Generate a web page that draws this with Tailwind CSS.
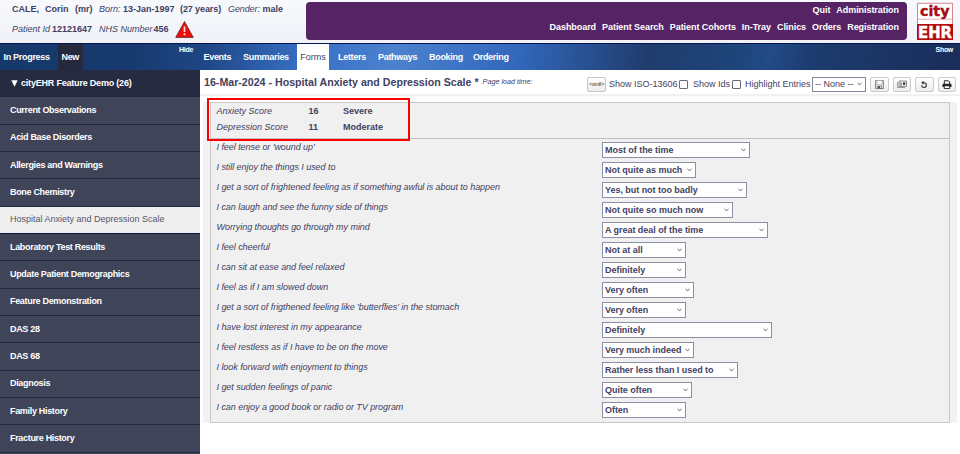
<!DOCTYPE html>
<html lang="en">
<head>
<meta charset="utf-8">
<title>cityEHR</title>
<script src="https://cdn.jsdelivr.net/npm/@tailwindcss/browser@4"></script>
</head>
<body class="w-[960px] h-[454px] overflow-hidden bg-white font-['Liberation_Sans',Arial,sans-serif] text-[9px] leading-none text-[#3f4162] flex flex-col whitespace-nowrap">
<header class="h-[43px] shrink-0 flex bg-linear-to-b from-[#f7f9fd] to-[#f0f2f8]">
  <div class="w-[306px] pl-3 shrink-0 text-[9px]">
    <div class="h-[19.5px] flex items-center font-bold">
      <span class="w-[33px]">CALE,</span><span class="w-[30px]">Corin</span><span class="w-6">(mr)</span>
      <span class="w-6 italic font-normal">Born:</span><span class="w-[57px]">13-Jan-1997</span><span class="w-[48px] tracking-[-.1px]">(27 years)</span>
      <span class="w-[34.5px] italic font-normal tracking-[-.1px]">Gender:</span><span>male</span>
    </div>
    <div class="h-5 flex items-center font-bold">
      <span class="w-10 italic font-normal">Patient Id</span><span class="w-[47px]">12121647</span>
      <span class="w-[54.5px] italic font-normal">NHS Number</span><span class="w-[21px]">456</span>
      <svg class="w-[19px] h-[17px]" viewBox="0 0 19 17"><path d="M9.5 .5 18.3 16.4H.7Z" fill="#f00b08" stroke="#622725" stroke-width=".8"/><path d="M9.5 5.5v5.4M9.5 12.3v2" stroke="#ffe9e9" stroke-width="1.7"/></svg>
    </div>
  </div>
  <div class="w-[601px] h-[38px] mt-0.5 shrink-0 rounded bg-[#562465] text-white font-bold text-[9px] tracking-[-.06px] pr-2 flex flex-col items-end">
    <div class="h-4 flex items-center gap-1.5"><span>Quit</span><span>Administration</span></div>
    <div class="h-4 mt-px flex items-center gap-1.5"><span>Dashboard</span><span>Patient Search</span><span>Patient Cohorts</span><span>In-Tray</span><span>Clinics</span><span>Orders</span><span>Registration</span></div>
  </div>
  <svg class="ml-[9px] mt-[2px] w-[38px] h-[39px]" viewBox="0 0 38 39">
    <path d="M1.5 1.3h35v36h-35z" fill="#fff" stroke="#cf5255" stroke-width=".7"/><path d="M1 17.2h36" stroke="#e28a8c" stroke-width=".7"/><path d="M1 22h36v16H1z" fill="#b40b10"/>
    <text x="4" y="14.3" textLength="29.5" lengthAdjust="spacingAndGlyphs" font-family="DejaVu Sans" font-weight="bold" font-size="14" fill="#a90d12" stroke="#a90d12" stroke-width=".4">city</text>
    <text x="2" y="36.2" textLength="34" lengthAdjust="spacingAndGlyphs" font-family="DejaVu Sans" font-weight="bold" font-size="16" fill="#fff" stroke="#fff" stroke-width=".5">EHR</text>
  </svg>
</header>
<nav class="h-[27px] shrink-0 border-t border-[#0a1452] flex text-white font-bold text-[9px] tracking-[-.3px] bg-[linear-gradient(100deg,#16396c_0,#17396e_130px,#1e4583_200px,#376fc4_300px,#4c81cf_390px,#3268bd_510px,#203c6d_640px,#1e457b_730px,#224b88_760px,#1c3c6f_800px,#1a2c59_960px)]">
  <div class="w-[200px] flex">
    <span class="w-[58px] pl-[3.5px] flex items-center">In Progress</span>
    <span class="w-[24.5px] bg-[#26283d] flex items-center justify-center">New</span>
    <span class="ml-auto mr-[7px] mt-0.5 text-[7px]">Hide</span>
  </div>
  <div class="flex items-center">
    <span class="w-[43px] pl-[3.5px]">Events</span><span class="w-[54px]">Summaries</span>
    <span class="h-full w-[32px] bg-white text-[#3f4162] font-normal tracking-[0] flex items-center justify-center">Forms</span>
    <span class="w-10 ml-[9px]">Letters</span><span class="w-[51px]">Pathways</span><span class="w-[44px]">Booking</span><span>Ordering</span>
  </div>
  <span class="ml-auto mr-[7px] mt-0.5 text-[7px]">Show</span>
</nav>
<div class="flex grow min-h-0">
  <aside id="side" class="w-[200px] shrink-0 overflow-hidden text-[9px] tracking-[-.32px] text-white font-bold bg-[#404458]">
    <div class="h-[27.3px] pl-[11px] flex items-center gap-[3px] tracking-[-.2px] bg-[#272b42] border-b border-[#22253d]">
      <svg class="w-[7px] h-[7px]" viewBox="0 0 7 7"><path d="M.3 .3h6.4L3.5 6.8Z" fill="#fff"/></svg><span>cityEHR Feature Demo (26)</span>
    </div>
  </aside>
  <main class="grow min-w-0">
    <div class="h-[26px] flex items-center pl-1 pr-1 border-b-2 border-[#f1f1f2]">
      <span class="text-[10.65px] font-bold">16-Mar-2024 - Hospital Anxiety and Depression Scale *</span>
      <span class="text-[7.2px] italic ml-1">Page load time:</span>
      <div class="ml-auto mt-1 flex items-center text-[9px]">
        <span class="w-[19px] h-[15px] border border-[#c4c4c4] rounded-[2px] bg-linear-to-b from-white to-[#ececec] flex items-center justify-center text-[6px] tracking-[-.5px] text-[#333]">&lt;xml/&gt;</span>
        <span class="w-[73px] pl-[3px]">Show ISO-13606</span><span class="w-[9px] h-[9px] border border-[#686979] rounded-[1px]"></span>
        <span class="w-[44px] pl-[5px]">Show Ids</span><span class="w-[9px] h-[9px] border border-[#686979] rounded-[1px]"></span>
        <span class="w-[71px] pl-1">Highlight Entries</span>
        <span class="w-[54px] h-[15px] border border-[#83859b] bg-white flex items-center pl-0.5 pr-[3px]">-- None --<svg class="ml-auto w-[5px] h-[4px]" viewBox="0 0 5 4"><path d="M.5 .7 2.5 3 4.5 .7" fill="none" stroke="#4b4d6b" stroke-width=".8"/></svg></span>
        <div class="ml-1 flex gap-1">
          <span class="w-[18.5px] h-[15px] border border-[#cbcbcb] rounded-[2px] bg-linear-to-b from-white to-[#ececec] flex items-center justify-center"><svg class="w-[9px] h-[9px]" viewBox="0 0 9 9"><path d="M.5 .5h8v8h-8z" fill="#d7d7d7" stroke="#777" stroke-width=".8"/><path d="M2 .5h5v4H2z" fill="#fff" stroke="#999" stroke-width=".5"/><path d="M2.5 6h4v2.5h-4z" fill="#555"/><path d="M5 6.5h1v1.5H5z" fill="#eee"/></svg></span>
          <span class="w-[18.5px] h-[15px] border border-[#cbcbcb] rounded-[2px] bg-linear-to-b from-white to-[#ececec] flex items-center justify-center"><svg class="w-[10px] h-[8px]" viewBox="0 0 10 8"><path d="M2 1h7.5v5.5H2z" fill="#eee" stroke="#666" stroke-width=".7"/><path d="M.5 2v5.5H8" fill="none" stroke="#777" stroke-width=".7"/><path d="M3 2.5h2v3H3z" fill="#999"/><path d="M6 2.5h2.3v2.3H6z" fill="#333"/></svg></span>
          <span class="w-[18.5px] h-[15px] border border-[#cbcbcb] rounded-[2px] bg-linear-to-b from-white to-[#ececec] flex items-center justify-center"><svg class="w-[8px] h-[9px]" viewBox="0 0 8 9"><path d="M2.8 2.7H4a2.4 2.4 0 1 1-2.4 2.6" fill="none" stroke="#333" stroke-width="1.1"/><path d="M1.1 2.7 3.6 .7v4Z" fill="#333"/></svg></span>
          <span class="w-[18.5px] h-[15px] border border-[#cbcbcb] rounded-[2px] bg-linear-to-b from-white to-[#ececec] flex items-center justify-center"><svg class="w-[10px] h-[9px]" viewBox="0 0 10 9"><path d="M2.3 4V.8h4.2l1.2 1.2v2" fill="#fff" stroke="#222" stroke-width="1"/><path d="M1.5 3.7h7q1 0 1 1v2.2h-9V4.7q0-1 1-1z" fill="#222"/><path d="M2.3 5.8h5.4v2.7H2.3z" fill="#fff" stroke="#222" stroke-width=".9"/></svg></span>
        </div>
      </div>
    </div>
    <div class="relative ml-[3px] mr-[3px] mt-[6px] h-[321px] px-[7px] bg-[#f2f2f2]">
      <div class="h-full border border-[#c8c8ca] bg-[#f0f0f0] text-[9px]">
        <div class="h-[36px] border-b-[1.5px] border-[#c0c0c2] pl-[5.5px]">
          <div class="h-4 flex items-center"><i class="w-[92px]">Anxiety Score</i><b class="w-[34.5px]">16</b><b>Severe</b></div>
          <div class="h-4 flex items-center"><i class="w-[92px]">Depression Score</i><b class="w-[34.5px]">11</b><b>Moderate</b></div>
        </div>
        <div id="questions" class="pl-[5.5px]"></div>
      </div>
      <div class="absolute left-[4px] top-[-4px] w-[203px] h-[43px] border-2 border-[#fb0000]"></div>
    </div>
  </main>
</div>
<script>
const forms = ['Current Observations','Acid Base Disorders','Allergies and Warnings','Bone Chemistry','Hospital Anxiety and Depression Scale','Laboratory Test Results','Update Patient Demographics','Feature Demonstration','DAS 28','DAS 68','Diagnosis','Family History','Fracture History'];
document.getElementById('side').insertAdjacentHTML('beforeend', forms.map((t, i) => i === 4
  ? `<div class="h-[27.35px] pl-2.5 flex items-center bg-[#efefef] text-[#54566d] font-normal tracking-[0] border-b border-[#10163e]">${t}</div>`
  : `<div class="h-[27.35px] pl-2.5 flex items-center bg-[#404458] border-b border-[#252944]">${t}</div>`).join(''));
const questions = [
 ["I feel tense or 'wound up'",'Most of the time',148],
 ['I still enjoy the things I used to','Not quite as much',94],
 ['I get a sort of frightened feeling as if something awful is about to happen','Yes, but not too badly',145],
 ['I can laugh and see the funny side of things','Not quite so much now',131],
 ['Worrying thoughts go through my mind','A great deal of the time',166],
 ['I feel cheerful','Not at all',84],
 ['I can sit at ease and feel relaxed','Definitely',84],
 ['I feel as if I am slowed down','Very often',91.5],
 ["I get a sort of frigthened feeling like 'butterflies' in the stomach",'Very often',84],
 ['I have lost interest in my appearance','Definitely',170],
 ['I feel restless as if I have to be on the move','Very much indeed',91.5],
 ['I look forward with enjoyment to things','Rather less than I used to',135.5],
 ['I get sudden feelings of panic','Quite often',89.5],
 ['I can enjoy a good book or radio or TV program','Often',84]];
document.getElementById('questions').innerHTML = questions.map(([q, a, w]) => `<div class="h-5 flex">
 <i class="w-[385.5px] pt-[4px] tracking-[-.05px]">${q}</i>
 <span class="h-[16px] mt-[3px] border border-[#8d8fa5] bg-white flex items-center font-bold tracking-[-.04px] pl-[2px] pr-[3px]" style="width:${w}px">${a}<svg class="ml-auto w-[5px] h-[4px]" viewBox="0 0 5 4"><path d="M.5 .7 2.5 3 4.5 .7" fill="none" stroke="#4b4d6b" stroke-width=".8"/></svg></span></div>`).join('');
</script>
</body>
</html>
